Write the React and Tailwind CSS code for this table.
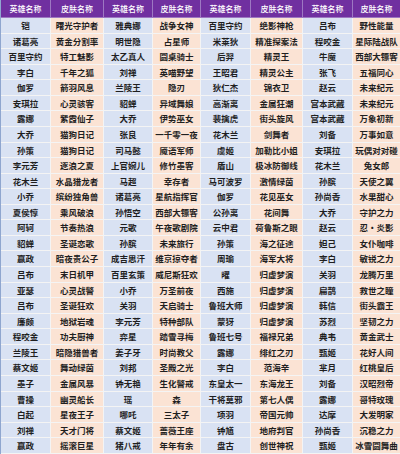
import React from "react";

const rows = [
  ["铠", "曙光守护者", "雅典娜", "战争女神", "百里守约", "绝影神枪", "吕布", "野性能量"],
  ["诸葛亮", "黄金分割率", "明世隐", "占星师", "米莱狄", "精准探案法", "程咬金", "星际陆战队"],
  ["百里守约", "特工魅影", "太乙真人", "圆桌骑士", "后羿", "精灵王", "牛魔", "西部大镖客"],
  ["李白", "千年之狐", "刘禅", "英喵野望", "王昭君", "精灵公主", "张飞", "五福同心"],
  ["伽罗", "箭羽风息", "兰陵王", "隐刃", "狄仁杰", "锦衣卫", "赵云", "未来纪元"],
  ["安琪拉", "心灵骇客", "貂蝉", "异域舞娘", "高渐离", "金属狂潮", "宫本武藏", "未来纪元"],
  ["露娜", "紫霞仙子", "大乔", "伊势巫女", "裴擒虎", "街头旋风", "宫本武藏", "万象初新"],
  ["大乔", "猫狗日记", "张良", "一千零一夜", "花木兰", "剑舞者", "刘备", "万事如意"],
  ["孙策", "猫狗日记", "司马懿", "魇语军师", "虞姬", "加勒比小姐", "安琪拉", "玩偶对对碰"],
  ["李元芳", "逐浪之夏", "上官婉儿", "修竹墨客", "盾山", "极冰防御线", "花木兰", "兔女郎"],
  ["花木兰", "水晶猎龙者", "马超", "幸存者", "马可波罗", "激情绿茵", "孙膑", "天使之翼"],
  ["小乔", "缤纷独角兽", "诸葛亮", "星航指挥官", "伽罗", "花见巫女", "孙尚香", "水果甜心"],
  ["夏侯惇", "乘风破浪", "孙悟空", "西部大镖客", "公孙离", "花间舞", "大乔", "守护之力"],
  ["阿轲", "节奏热浪", "元歌", "午夜歌剧院", "云中君", "荷鲁斯之眼", "赵云", "忍·炎影"],
  ["貂蝉", "圣诞恋歌", "孙膑", "未来旅行", "孙策", "海之征途", "妲己", "女仆咖啡"],
  ["嬴政", "暗夜贵公子", "成吉思汗", "维京掠夺者", "周瑜", "海军大将", "李白", "敏锐之力"],
  ["吕布", "末日机甲", "百里玄策", "威尼斯狂欢", "曜", "归虚梦演", "关羽", "龙腾万里"],
  ["亚瑟", "心灵战警", "小乔", "万圣前夜", "西施", "归虚梦演", "扁鹊", "救世之瞳"],
  ["吕布", "圣诞狂欢", "关羽", "天启骑士", "鲁班大师", "归虚梦演", "韩信", "街头霸王"],
  ["廉颇", "地狱岩魂", "李元芳", "特种部队", "蒙犽", "归虚梦演", "苏烈", "坚韧之力"],
  ["程咬金", "功夫厨神", "弈星", "踏雪寻梅", "鲁班七号", "福禄兄弟", "典韦", "黄金武士"],
  ["兰陵王", "暗隐猎兽者", "姜子牙", "时尚教父", "露娜", "绯红之刃", "甄姬", "花好人间"],
  ["蔡文姬", "舞动绿茵", "刘邦", "圣殿之光", "李白", "范海辛", "芈月", "红桃皇后"],
  ["墨子", "金属风暴", "钟无艳", "生化警戒", "东皇太一", "东海龙王", "刘备", "汉昭烈帝"],
  ["曹操", "幽灵船长", "瑶", "森", "干将莫邪", "第七人偶", "露娜", "哥特玫瑰"],
  ["白起", "星夜王子", "哪吒", "三太子", "项羽", "帝国元帅", "达摩", "大发明家"],
  ["刘禅", "天才门将", "蔡文姬", "蔷薇王座", "钟馗", "地府判官", "孙尚香", "沉稳之力"],
  ["嬴政", "摇滚巨星", "猪八戒", "年年有余", "盘古", "创世神祝", "甄姬", "冰雪圆舞曲"],
];

const headers = ["英雄名称", "皮肤名称", "英雄名称", "皮肤名称", "英雄名称", "皮肤名称", "英雄名称", "皮肤名称"];

export default function App() {
  return (
    <div
      className="w-[400px] h-[454px] overflow-hidden bg-white"
      style={{ fontFamily: '"Noto Sans CJK SC", "Noto Sans", sans-serif' }}
    >
      <div className="grid grid-cols-[50px_53px_49px_48px_50px_52px_50px_48px] grid-rows-[18px_repeat(28,15.57px)] border-l border-[#8fa6cf]">
        {headers.map((h, i) => (
          <div
            key={"h" + i}
            className="flex items-center justify-center bg-[#7030a0] text-white text-[8px] font-medium leading-none border-r border-b border-[#9d78c2]"
          >
            {h}
          </div>
        ))}
        {rows.map((row, r) =>
          row.map((cell, c) => (
            <div
              key={r + "-" + c}
              className={
                "flex items-center justify-center text-[8.5px] font-semibold leading-none whitespace-nowrap text-[#1f1f1f] border-r border-b border-[#f4f4f4] " +
                (c % 2 === 0 ? "bg-[#d9e2f3]" : "bg-[#fbe3d4]")
              }
            >
              {cell}
            </div>
          ))
        )}
      </div>
    </div>
  );
}
